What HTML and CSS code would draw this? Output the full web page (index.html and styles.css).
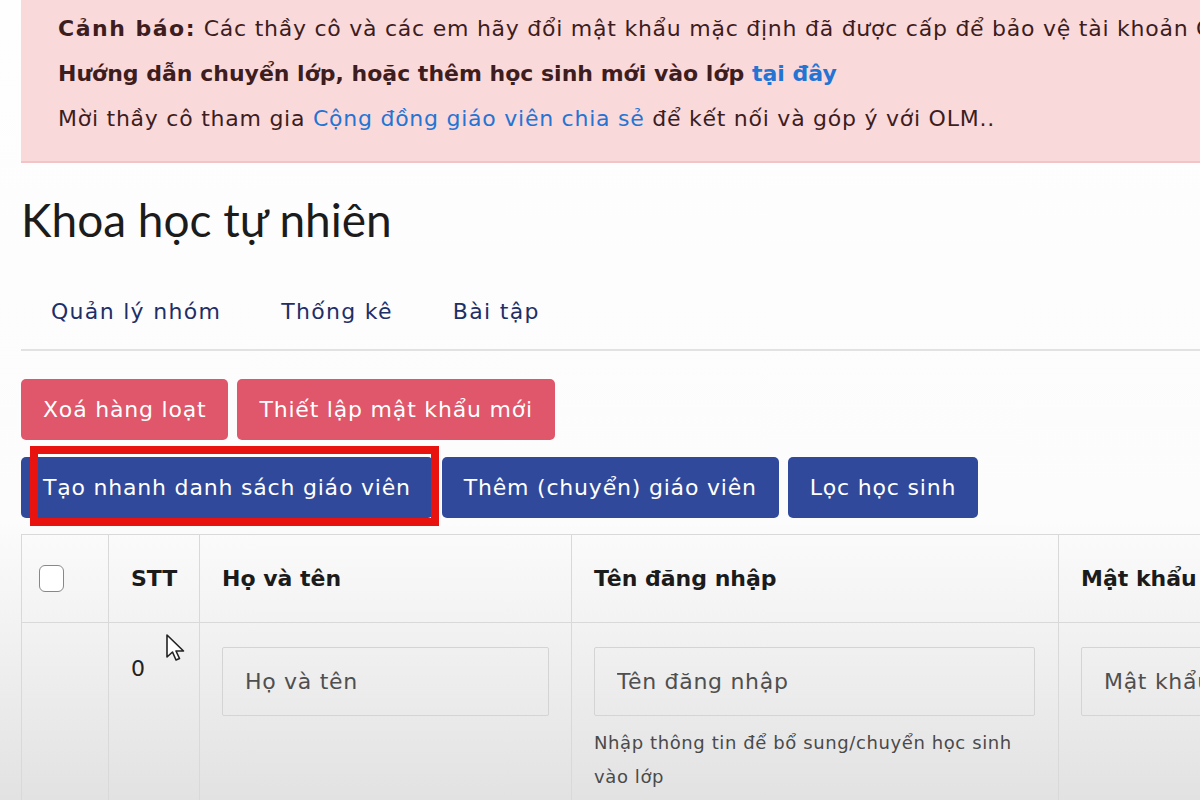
FILE: index.html
```html
<!DOCTYPE html>
<html lang="vi">
<head>
    <meta charset="UTF-8">
    <meta name="viewport" content="width=device-width, initial-scale=1.0">
    <title>Khoa học tự nhiên</title>
    <link rel="stylesheet" href="styles.css">
</head>
<body>
    <div class="page">
        <div class="alert">
            <p><b>Cảnh báo:</b> Các thầy cô và các em hãy đổi mật khẩu mặc định đã được cấp để bảo vệ tài khoản OLM của mình.</p>
            <p><b>Hướng dẫn chuyển lớp, hoặc thêm học sinh mới vào lớp <a href="#">tại đây</a></b></p>
            <p>Mời thầy cô tham gia <a href="#">Cộng đồng giáo viên chia sẻ</a> để kết nối và góp ý với OLM..</p>
        </div>

        <h1 class="title">Khoa học tự nhiên</h1>

        <nav class="tabs">
            <a href="#">Quản lý nhóm</a>
            <a href="#">Thống kê</a>
            <a href="#">Bài tập</a>
        </nav>

        <div class="actions">
            <button class="btn btn-red">Xoá hàng loạt</button>
            <button class="btn btn-red">Thiết lập mật khẩu mới</button>
        </div>
        <div class="actions">
            <button class="btn btn-blue marked">Tạo nhanh danh sách giáo viên</button>
            <button class="btn btn-blue">Thêm (chuyển) giáo viên</button>
            <button class="btn btn-blue">Lọc học sinh</button>
        </div>

        <table class="members">
            <colgroup>
                <col class="c-check">
                <col class="c-stt">
                <col class="c-name">
                <col class="c-user">
                <col class="c-pass">
            </colgroup>
            <tr>
                <th><span class="checkbox"></span></th>
                <th>STT</th>
                <th>Họ và tên</th>
                <th>Tên đăng nhập</th>
                <th>Mật khẩu</th>
            </tr>
            <tr>
                <td></td>
                <td class="num">0</td>
                <td><input type="text" placeholder="Họ và tên"></td>
                <td>
                    <input type="text" placeholder="Tên đăng nhập">
                    <p class="hint">Nhập thông tin để bổ sung/chuyển học sinh vào lớp</p>
                </td>
                <td><input type="text" placeholder="Mật khẩu"></td>
            </tr>
        </table>
    </div>

    <!-- mouse pointer -->
    <svg class="pointer" width="22" height="32" viewBox="0 0 22 32">
        <path d="M2 2 L2 24 L7.5 19 L11 27 L14.5 25.5 L11 18 L18.5 18 Z" fill="#fff" stroke="#222" stroke-width="1.6" stroke-linejoin="round"/>
    </svg>
</body>
</html>
```

FILE: styles.css
```css
html, body {
    margin: 0;
    height: 100%;
}
body {
    font-family: "DejaVu Sans", "Noto Sans", sans-serif;
    color: #222;
    overflow: hidden;
    background: linear-gradient(180deg, #fefefe 0, #fcfcfc 520px, #e2e2e2 800px);
    position: relative;
}
.page {
    padding-left: 21px;
    width: 1400px;
}

/* warning box */
.alert {
    background: #fad9da;
    border-bottom: 2px solid #f3c4c7;
    padding: 6px 0 20px 37px;
    color: #3d1d1e;
    font-size: 22px;
    line-height: 45px;
    letter-spacing: 0.75px;
}
.alert p {
    margin: 0;
    white-space: nowrap;
}
.alert b {
    font-weight: 600;
    letter-spacing: 0;
}
.alert p:first-child b {
    letter-spacing: 1.5px;
}
.alert a {
    color: #2474d4;
    text-decoration: none;
}

.title {
    margin: 32px 0 0;
    font-family: Lato, sans-serif;
    font-size: 46px;
    font-weight: 400;
    line-height: 50px;
    color: #1c1c1c;
}

.tabs {
    display: flex;
    margin-top: 31px;
    border-bottom: 2px solid #e2e2e2;
}
.tabs a {
    padding: 21px 30px 22px;
    font-size: 22px;
    line-height: 30px;
    letter-spacing: 1.3px;
    color: #1e2f68;
    text-decoration: none;
}

.actions {
    display: flex;
    gap: 9px;
    margin-top: 28px;
}
.actions + .actions {
    margin-top: 17px;
}
.btn {
    border: 0;
    border-radius: 5px;
    height: 61px;
    padding: 0 22px;
    font-family: inherit;
    font-size: 22px;
    letter-spacing: 0.8px;
    color: #fff;
}
.btn-red {
    background: #e0566a;
}
.btn-blue {
    background: #31499a;
}
.marked {
    position: relative;
}
.marked::after {
    content: "";
    position: absolute;
    left: 9px;
    top: -11px;
    right: -6px;
    bottom: -8px;
    border: 8px solid #e8130f;
}

/* member table */
.members {
    margin-top: 16px;
    border-collapse: collapse;
    table-layout: fixed;
    width: 1300px;
}
.c-check { width: 87px; }
.c-stt { width: 91px; }
.c-name { width: 372px; }
.c-user { width: 487px; }
.c-pass { width: 263px; }
.members th,
.members td {
    border: 1px solid #d9d9d9;
    text-align: left;
    vertical-align: top;
    font-size: 22px;
}
.members th {
    height: 87px;
    vertical-align: middle;
    padding: 0 22px;
    font-weight: 700;
    color: #1b1b1b;
}
.members td {
    padding: 24px 22px 0;
    height: 180px;
}
.members td.num {
    padding-top: 33px;
    color: #222;
}
.checkbox {
    display: block;
    width: 23px;
    height: 25px;
    border: 1.5px solid #888;
    border-radius: 6px;
    background: #fff;
    margin-left: -5px;
}
.members input {
    box-sizing: border-box;
    width: 100%;
    height: 69px;
    border: 1.5px solid #d4d4d4;
    border-radius: 2px;
    background: transparent;
    padding: 0 22px;
    font-family: inherit;
    font-size: 22px;
    letter-spacing: 0.7px;
    color: #333;
}
.members input::placeholder {
    color: #4f4f4f;
}
.members td:nth-child(4) input {
    width: 441px;
}
.hint {
    margin: 10px 0 0;
    font-size: 18px;
    line-height: 34px;
    letter-spacing: 0.6px;
    color: #4a4a4a;
    width: 420px;
}

.pointer {
    position: absolute;
    left: 165px;
    top: 633px;
}
```
